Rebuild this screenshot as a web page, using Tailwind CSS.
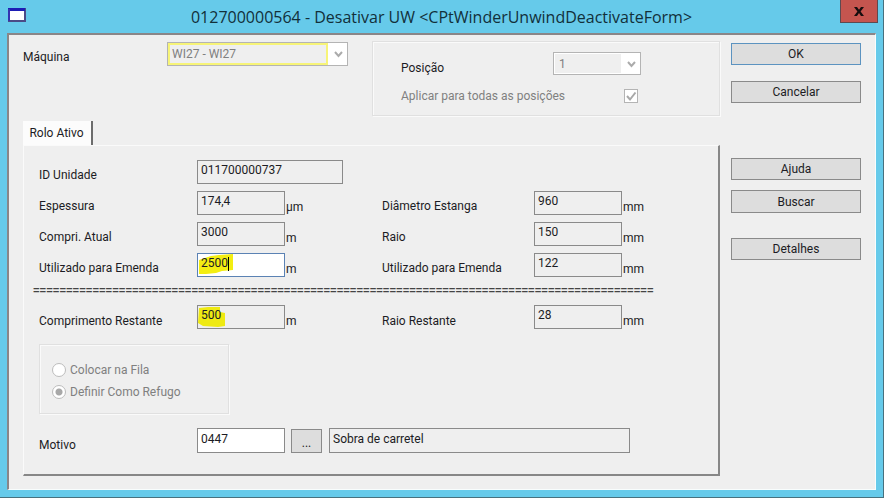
<!DOCTYPE html>
<html lang="pt-BR">
<head>
<meta charset="utf-8">
<meta name="viewport" content="width=device-width, initial-scale=1">
<title>Desativar UW</title>
<script src="https://cdn.jsdelivr.net/npm/@tailwindcss/browser@4"></script>
</head>
<body class="font-[Roboto,'Liberation_Sans',Arial,sans-serif] text-xs leading-4 text-[#1c1c24]">
<div class="flex min-h-screen flex-col border-r border-b border-[#47717e] bg-[#66caea]">
  <header class="relative flex h-[33px] items-center justify-center">
    <svg class="absolute left-2 top-2" width="18" height="14" viewBox="0 0 18 14" aria-hidden="true">
      <rect x="1" y="1" width="16" height="12" fill="#fff" stroke="#4b4b86" stroke-width="2"/>
      <path d="M0 1.500H17" stroke="#1d1db4" stroke-width="3"/>
      <path d="M1 1V13" stroke="#3434b0" stroke-width="2"/>
    </svg>
    <h1 class="font-['Open_Sans','Noto_Sans',sans-serif] text-base leading-5 text-[#12303a]">012700000564 - Desativar UW &lt;CPtWinderUnwindDeactivateForm&gt;</h1>
    <button type="button" aria-label="Fechar" class="absolute right-[5px] top-0 flex h-[23px] w-[38px] items-center justify-center border border-t-0 border-[#5e4a50] bg-[#c5554f]">
      <svg width="10" height="9" viewBox="0 0 10 9" aria-hidden="true"><path d="M0 0H3L5 2.700L7 0H10L6.600 4.400L10 9H7L5 6.100L3 9H0L3.400 4.400Z" fill="#160d0e"/></svg>
    </button>
  </header>

  <main class="mx-[7px] mb-[7px] flex flex-1 border-t-2 border-r border-b border-l-2 border-t-[#8a8688] border-l-[#8a8688] border-r-[#f8fdfd] border-b-[#f8fdfd] bg-[#efefef] pt-[6px] pr-[14px] pb-[13px] pl-[14px]">
    <form class="flex flex-1 gap-[11px]">
      <div class="flex flex-1 flex-col">
        <div class="flex items-start">
          <label for="maquina" class="w-36 pt-2">Máquina</label>
          <div class="relative mt-px w-[181px]">
            <select id="maquina" disabled class="h-6 w-full appearance-none border border-[#b4b4b4] bg-white p-px pr-5 opacity-100"><option>WI27 - WI27</option></select>
            <div class="pointer-events-none absolute top-px left-px right-[20px] flex h-[22px] items-center border-2 border-[#f7f478] bg-[#efefef] pl-[2px] text-[#808080]" aria-hidden="true">WI27 - WI27</div>
            <svg class="pointer-events-none absolute right-[5px] top-[9px]" width="9" height="7" viewBox="0 0 9 7" aria-hidden="true"><path d="M1 1L4.500 5L8 1" fill="none" stroke="#ababab" stroke-width="2"/></svg>
          </div>
          <fieldset disabled class="ml-6 flex h-[75px] flex-1 flex-col border border-[#e0e0e0] pt-[10px] pl-7 shadow-[1px_1px_0_#fafafa,inset_1px_1px_0_#fafafa]">
            <div class="flex items-start">
              <label for="posicao" class="w-[152px] pt-2">Posição</label>
              <div class="relative w-[88px]">
                <select id="posicao" class="h-[23px] w-full appearance-none border border-[#b4b4b4] bg-white p-px opacity-100"><option>1</option></select>
                <div class="pointer-events-none absolute top-[2px] bottom-[2px] left-[2px] right-[20px] flex items-center bg-[#efefef] pl-[4px] text-[#808080]" aria-hidden="true">1</div>
                <svg class="pointer-events-none absolute right-[5px] top-[9px]" width="9" height="7" viewBox="0 0 9 7" aria-hidden="true"><path d="M1 1L4.500 5L8 1" fill="none" stroke="#ababab" stroke-width="2"/></svg>
              </div>
            </div>
            <div class="mt-3 flex items-center text-[#808080]">
              <label for="todas" class="w-[223px]">Aplicar para todas as posições</label>
              <span class="relative flex">
                <input id="todas" type="checkbox" checked class="size-[14px] appearance-none border border-[#b4b4b4] bg-white">
                <svg class="pointer-events-none absolute inset-0" width="14" height="14" viewBox="0 0 14 14" aria-hidden="true"><path d="M3 7L6 10.500L11.500 3.500" fill="none" stroke="#a8a8a8" stroke-width="2"/></svg>
              </span>
            </div>
          </fieldset>
        </div>

        <div role="tablist" class="mt-[5px] flex">
          <button type="button" role="tab" aria-selected="true" class="h-6 w-[70px] border-r-2 border-[#6c6c6c] bg-[#fcfcfc] pr-px">Rolo Ativo</button>
        </div>
        <section role="tabpanel" class="flex flex-1 flex-col border-t border-r-2 border-b-2 border-l border-t-[#fafafa] border-l-[#fafafa] border-r-[#878787] border-b-[#878787] pt-[14px] pl-[15px]">
          <div class="grid grid-cols-[158px_88px_97px_152px_88px_1fr] items-end gap-y-[7px] *:[label]:pb-px">
            <label for="id">ID Unidade</label>
            <input id="id" readonly value="011700000737" class="col-span-5 h-6 w-[146px] border border-[#8a8a8a] px-[3px] pb-1">

            <label for="esp">Espessura</label>
            <input id="esp" readonly value="174,4" class="h-6 w-full border border-[#8a8a8a] px-[3px] pb-1">
            <span class="pl-px">µm</span>
            <label for="dia">Diâmetro Estanga</label>
            <input id="dia" readonly value="960" class="h-6 w-full border border-[#8a8a8a] px-[3px] pb-1">
            <span class="pl-px">mm</span>

            <label for="comp">Compri. Atual</label>
            <input id="comp" readonly value="3000" class="h-6 w-full border border-[#8a8a8a] px-[3px] pb-1">
            <span class="pl-px">m</span>
            <label for="raio">Raio</label>
            <input id="raio" readonly value="150" class="h-6 w-full border border-[#8a8a8a] px-[3px] pb-1">
            <span class="pl-px">mm</span>

            <label for="util">Utilizado para Emenda</label>
            <div class="relative bg-white">
              <svg class="pointer-events-none absolute left-px top-px" width="37" height="21" viewBox="0 0 37 21" aria-hidden="true"><path d="M1 6L13 2L21 1L35 0V16L24 17L18 19L8 20L1 20Z" fill="#f3ee12"/></svg>
              <input id="util" value="2500" class="relative h-6 w-full border border-[#5b82b4] px-[3px] pb-1">
              <span class="absolute left-[31px] top-1 h-[14px] w-px bg-black" aria-hidden="true"></span>
            </div>
            <span class="pl-px">m</span>
            <label for="util2">Utilizado para Emenda</label>
            <input id="util2" readonly value="122" class="h-6 w-full border border-[#8a8a8a] px-[3px] pb-1">
            <span class="pl-px">mm</span>
          </div>

          <div class="-ml-[6px] flex h-7 items-center overflow-hidden font-['Liberation_Mono',monospace] text-[11px] font-bold whitespace-nowrap text-[#444]" aria-hidden="true">==============================================================================================</div>

          <div class="grid grid-cols-[158px_88px_97px_152px_88px_1fr] items-end">
            <label for="rest">Comprimento Restante</label>
            <div class="relative">
              <svg class="pointer-events-none absolute left-px top-px" width="28" height="21" viewBox="0 0 28 21" aria-hidden="true"><path d="M1 2L10 1L22 1V6L27 7V20L20 21L5 20L0 17Z" fill="#efea12"/></svg>
              <input id="rest" readonly value="500" class="relative h-6 w-full border border-[#8a8a8a] px-[3px] pb-1">
            </div>
            <span class="pl-px">m</span>
            <label for="raiorest">Raio Restante</label>
            <input id="raiorest" readonly value="28" class="h-6 w-full border border-[#8a8a8a] px-[3px] pb-1">
            <span class="pl-px">mm</span>
          </div>

          <fieldset disabled class="mt-[15px] flex h-[70px] w-[190px] flex-col gap-[6px] border border-[#e0e0e0] pt-[17px] pl-3 text-[#808080] shadow-[1px_1px_0_#fafafa,inset_1px_1px_0_#fafafa]">
            <label class="flex items-center gap-1"><input type="radio" name="destino" class="size-[14px] appearance-none rounded-full border border-[#bcbcbc] bg-white">Colocar na Fila</label>
            <label class="flex items-center gap-1"><input type="radio" name="destino" checked class="size-[14px] appearance-none rounded-full border border-[#bcbcbc] bg-[radial-gradient(circle,#a8a8a8_3px,#fff_4px)]">Definir Como Refugo</label>
          </fieldset>

          <div class="mt-[14px] flex items-end">
            <label for="motivo" class="w-[158px]">Motivo</label>
            <input id="motivo" value="0447" class="h-[25px] w-[88px] border border-[#8a8a8a] bg-white px-[3px] pb-1">
            <button type="button" aria-label="Procurar motivo" class="ml-[6px] h-6 w-[31px] border border-[#8a8a8a] bg-[#dddddd] pt-1">...</button>
            <input aria-label="Descrição do motivo" readonly value="Sobra de carretel" class="ml-[7px] mr-[88px] h-[25px] min-w-0 flex-1 border border-[#8a8a8a] px-[3px] pb-1">
          </div>
        </section>
      </div>

      <div class="flex w-[130px] flex-col pt-[2px]">
        <button type="button" class="h-[22px] border border-[#5c93c0] bg-[#dddddd]">OK</button>
        <button type="button" class="mt-4 h-[22px] border border-[#8a8a8a] bg-[#dddddd]">Cancelar</button>
        <button type="button" class="mt-[55px] h-[22px] border border-[#8a8a8a] bg-[#dddddd]">Ajuda</button>
        <button type="button" class="mt-[10px] h-[23px] border border-[#8a8a8a] bg-[#dddddd]">Buscar</button>
        <button type="button" class="mt-[25px] h-[22px] border border-[#8a8a8a] bg-[#dddddd]">Detalhes</button>
      </div>
    </form>
  </main>
</div>
</body>
</html>
